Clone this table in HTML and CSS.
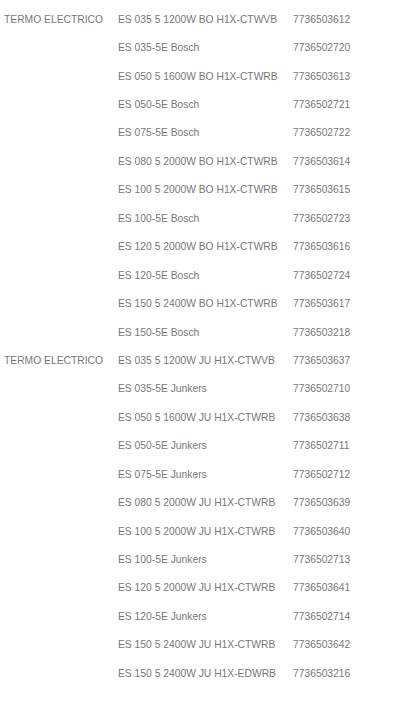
FILE: index.html
```html
<!DOCTYPE html>
<html lang="es">
<head>
    <meta charset="UTF-8">
    <meta name="viewport" content="width=device-width, initial-scale=1.0">
    <title>Termos electricos</title>
    <link rel="stylesheet" href="styles.css">
</head>
<body>
    <table class="lista">
        <tr><td class="grupo">TERMO ELECTRICO</td><td>ES 035 5 1200W BO H1X-CTWVB</td><td>7736503612</td></tr>
        <tr><td></td><td>ES 035-5E Bosch</td><td>7736502720</td></tr>
        <tr><td></td><td>ES 050 5 1600W BO H1X-CTWRB</td><td>7736503613</td></tr>
        <tr><td></td><td>ES 050-5E Bosch</td><td>7736502721</td></tr>
        <tr><td></td><td>ES 075-5E Bosch</td><td>7736502722</td></tr>
        <tr><td></td><td>ES 080 5 2000W BO H1X-CTWRB</td><td>7736503614</td></tr>
        <tr><td></td><td>ES 100 5 2000W BO H1X-CTWRB</td><td>7736503615</td></tr>
        <tr><td></td><td>ES 100-5E Bosch</td><td>7736502723</td></tr>
        <tr><td></td><td>ES 120 5 2000W BO H1X-CTWRB</td><td>7736503616</td></tr>
        <tr><td></td><td>ES 120-5E Bosch</td><td>7736502724</td></tr>
        <tr><td></td><td>ES 150 5 2400W BO H1X-CTWRB</td><td>7736503617</td></tr>
        <tr><td></td><td>ES 150-5E Bosch</td><td>7736503218</td></tr>
        <tr><td class="grupo">TERMO ELECTRICO</td><td>ES 035 5 1200W JU H1X-CTWVB</td><td>7736503637</td></tr>
        <tr><td></td><td>ES 035-5E Junkers</td><td>7736502710</td></tr>
        <tr><td></td><td>ES 050 5 1600W JU H1X-CTWRB</td><td>7736503638</td></tr>
        <tr><td></td><td>ES 050-5E Junkers</td><td>7736502711</td></tr>
        <tr><td></td><td>ES 075-5E Junkers</td><td>7736502712</td></tr>
        <tr><td></td><td>ES 080 5 2000W JU H1X-CTWRB</td><td>7736503639</td></tr>
        <tr><td></td><td>ES 100 5 2000W JU H1X-CTWRB</td><td>7736503640</td></tr>
        <tr><td></td><td>ES 100-5E Junkers</td><td>7736502713</td></tr>
        <tr><td></td><td>ES 120 5 2000W JU H1X-CTWRB</td><td>7736503641</td></tr>
        <tr><td></td><td>ES 120-5E Junkers</td><td>7736502714</td></tr>
        <tr><td></td><td>ES 150 5 2400W JU H1X-CTWRB</td><td>7736503642</td></tr>
        <tr><td></td><td>ES 150 5 2400W JU H1X-EDWRB</td><td>7736503216</td></tr>
    </table>
</body>
</html>
```

FILE: styles.css
```css
*{margin:0px;padding:0px;box-sizing:border-box;}

body{background:#fff;color:#777;font-family:"Liberation Sans", Arial, sans-serif;font-size:10.3px;}

.lista{border-collapse:collapse;margin-top:5px;table-layout:fixed;}

.lista tr{height:28.45px;}

.lista td{padding:0px;vertical-align:middle;white-space:nowrap;}

.lista td:nth-child(1){width:118px;padding-left:4px;}
.lista td:nth-child(2){width:175px;}
.lista td:nth-child(3){width:100px;}
```
